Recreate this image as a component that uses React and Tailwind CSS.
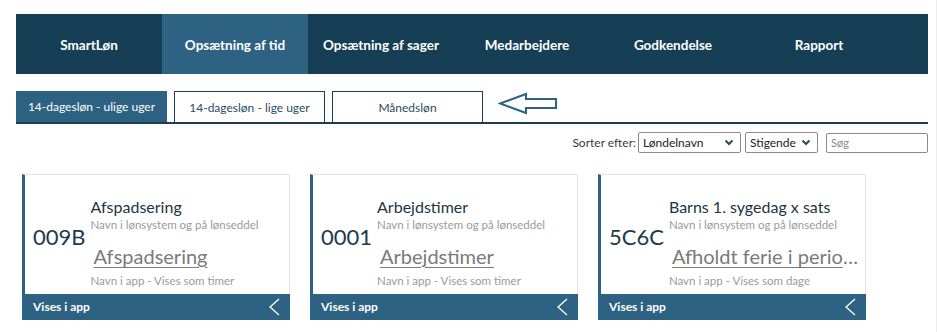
import React from 'react';

const navItems = ['SmartLøn', 'Opsætning af tid', 'Opsætning af sager', 'Medarbejdere', 'Godkendelse', 'Rapport'];

const tabs = ['14-dagesløn - ulige uger', '14-dagesløn - lige uger', 'Månedsløn'];

const cards = [
    { code: '009B', title: 'Afspadsering', app: 'Afspadsering', unit: 'timer' },
    { code: '0001', title: 'Arbejdstimer', app: 'Arbejdstimer', unit: 'timer' },
    { code: '5C6C', title: 'Barns 1. sygedag x sats', app: 'Afholdt ferie i perioden', unit: 'dage' },
];

const Chevron = () => (
    <svg width="10" height="7" viewBox="0 0 10 7" className="shrink-0">
        <polyline points="1.5,1.5 5,5 8.5,1.5" fill="none" stroke="#2b4a5e" strokeWidth="2" />
    </svg>
);

const Card = ({ item }) => (
    <div className="w-[268px] flex flex-col">
        <div className="h-[120px] flex border-l-[3px] border-l-[#2e6283] border-t border-r border-t-[#e3e3e3] border-r-[#e3e3e3] bg-white">
            <div className="pl-[8px] pt-[48px] text-[22px] leading-[28px] text-[#1d3a4d] shrink-0">{item.code}</div>
            <div className="flex-1 min-w-0 pl-[5px] pr-[2px] pt-[22px]">
                <div className="text-[16px] leading-[19px] text-[#1e3444] truncate">{item.title}</div>
                <div className="mt-[1px] text-[11.5px] leading-[16px] text-[#9a9a9a] truncate">Navn i lønsystem og på lønseddel</div>
                <div className="mt-[10px] pl-[3px] text-[20px] leading-[26px] text-[#7a7a7a] underline underline-offset-[3px] decoration-1 truncate">{item.app}</div>
                <div className="mt-[4px] text-[11.5px] leading-[16px] text-[#9a9a9a] truncate">Navn i app - Vises som {item.unit}</div>
            </div>
        </div>
        <div className="h-[26px] bg-[#2e6283] flex items-center justify-between pl-[11px] pr-[10px]">
            <span className="text-[12px] font-bold text-white">Vises i app</span>
            <svg width="12" height="18" viewBox="0 0 12 18">
                <polyline points="11,1 2,9 11,17" fill="none" stroke="#ffffff" strokeWidth="1.3" />
            </svg>
        </div>
    </div>
);

export default function App() {
    return (
        <div className="w-[937px] h-[332px] bg-white overflow-hidden border-r border-r-[#ececec] font-['Lato',sans-serif]">
            <div className="pl-4 pt-[14px] w-[928px]">
                <div className="h-[60px] bg-[#163f56] flex">
                    {navItems.map((name, i) => (
                        <div
                            key={name}
                            className={`w-[146px] pt-[3px] flex items-center justify-center text-[13.5px] font-bold text-white ${i === 1 ? 'bg-[#2e6283]' : ''}`}
                        >
                            {name}
                        </div>
                    ))}
                </div>

                <div className="mt-[17px] flex items-end gap-[7px] border-b-2 border-b-[#1d3e52]">
                    {tabs.map((t, i) => (
                        <div
                            key={t}
                            className={`w-[151px] h-[31px] pt-[1px] flex items-center justify-center text-[12px] ${i === 0 ? 'bg-[#2e6283] text-white' : 'bg-white text-[#2a4d63] border border-b-0 border-[#1d3e52]'}`}
                        >
                            {t}
                        </div>
                    ))}
                    <svg width="62" height="24" viewBox="0 0 62 24" className="ml-[8px] mb-[6px]">
                        <polygon points="2,11.5 28,2 28,7 58,7 58,16 28,16 28,21" fill="none" stroke="#2e6283" strokeWidth="2" strokeLinejoin="miter" />
                    </svg>
                </div>

                <div className="mt-[8px] w-[912px] flex items-center text-[12px] text-[#333]">
                    <span className="ml-auto shrink-0 mr-[2px] text-[#3a3a3a]">Sorter efter:</span>
                    <div className="shrink-0 w-[103px] h-[21px] border border-[#8a8a8a] rounded-[2px] flex items-center justify-between pl-[4px] pr-[6px] text-[#222]">
                        <span>Løndelnavn</span>
                        <Chevron />
                    </div>
                    <div className="shrink-0 ml-[4px] w-[73px] h-[21px] border border-[#8a8a8a] rounded-[2px] flex items-center justify-between pl-[4px] pr-[6px] text-[#222]">
                        <span>Stigende</span>
                        <Chevron />
                    </div>
                    <input
                        type="text"
                        placeholder="Søg"
                        className="shrink-0 ml-[8px] w-[102px] h-[20px] border border-[#8a8a8a] rounded-[2px] px-[4px] text-[11px] text-[#333] placeholder:text-[#888] outline-none"
                    />
                </div>

                <div className="mt-[21px] ml-[6px] flex gap-[20px]">
                    {cards.map((c) => (
                        <Card key={c.code} item={c} />
                    ))}
                </div>
            </div>
        </div>
    );
}
